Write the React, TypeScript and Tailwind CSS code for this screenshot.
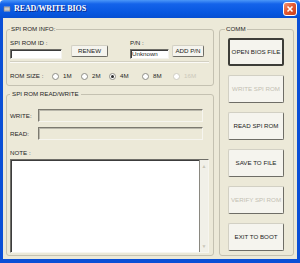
import React from 'react';

// 오른쪽 COMM 버튼 목록
const commButtons = [
  { label: 'OPEN BIOS FILE', isDefault: true, disabled: false },
  { label: 'WRITE SPI ROM', isDefault: false, disabled: true },
  { label: 'READ SPI ROM', isDefault: false, disabled: false },
  { label: 'SAVE TO FILE', isDefault: false, disabled: false },
  { label: 'VERIFY SPI ROM', isDefault: false, disabled: true },
  { label: 'EXIT TO BOOT', isDefault: false, disabled: false },
];

const romSizes = [
  { label: '1M', width: 'w-[29px]', checked: false, disabled: false },
  { label: '2M', width: 'w-[28px]', checked: false, disabled: false },
  { label: '4M', width: 'w-[33px]', checked: true, disabled: false },
  { label: '8M', width: 'w-[31px]', checked: false, disabled: false },
  { label: '16M', width: 'w-[30px]', checked: false, disabled: true },
];

const XpButton = ({
  children,
  className = '',
  isDefault = false,
  disabled = false,
}: {
  children: React.ReactNode;
  className?: string;
  isDefault?: boolean;
  disabled?: boolean;
}) => (
  <div
    className={`flex items-center justify-center rounded-[2px] bg-[#f5f4ee] ${
      isDefault
        ? 'border-2 border-[#3d3d38]'
        : 'border border-[#d2d0c4] border-r-[#6e6d66] border-b-[#6e6d66]'
    } ${disabled ? 'text-[#c3c0b2]' : 'text-[#1c1c1c]'} ${className}`}
  >
    {children}
  </div>
);

const Radio = ({
  label,
  width,
  checked,
  disabled,
}: {
  label: string;
  width: string;
  checked: boolean;
  disabled: boolean;
}) => (
  <div className={`flex items-center gap-[4px] ${width}`}>
    <span
      className={`flex h-[7px] w-[7px] items-center justify-center rounded-full border bg-white ${
        disabled ? 'border-[#cfcdc2]' : 'border-[#8e8d86]'
      }`}
    >
      {checked && <span className="h-[3px] w-[3px] rounded-full bg-[#2a2a2a]" />}
    </span>
    <span className={disabled ? 'text-[#cbc8ba]' : ''}>{label}</span>
  </div>
);

// 움푹 들어간 필드 (WRITE / READ)
const SunkenField = ({ label }: { label: string }) => (
  <div className="flex items-center">
    <span className="w-[28px]">{label}</span>
    <div className="h-[13px] w-[165px] border border-[#f6f5ef] border-t-[#7c7a70] border-l-[#7c7a70] bg-[#ece9d8] shadow-[inset_1px_1px_0_#b9b7ab]" />
  </div>
);

export default function App() {
  return (
    <div className="flex h-[263px] w-[300px] flex-col font-['Liberation_Sans',Arial,sans-serif] text-[6.2px] leading-[8px] text-[#262626]">
      {/* 타이틀 바 */}
      <div className="flex h-[18px] items-center rounded-t-[4px] bg-[linear-gradient(180deg,#4b97f8_0%,#1463ea_22%,#0757e0_70%,#064fd2_100%)] pl-[3px] pr-[3px]">
        <svg width="8" height="8" viewBox="0 0 8 8" className="mr-[3px]">
          <rect x="1" y="2" width="6" height="4" fill="#c9c9c9" stroke="#7a7a7a" strokeWidth="0.6" />
          <path d="M2 1v1M4 1v1M6 1v1M2 6v1M4 6v1M6 6v1" stroke="#d8d8d8" strokeWidth="0.6" />
        </svg>
        <span className="font-['Liberation_Serif',serif] text-[8px] font-bold tracking-[-0.1px] text-white [text-shadow:1px_1px_0_#0a2a8a]">
          READ/WRITE BIOS
        </span>
        <div className="ml-auto flex h-[14px] w-[14px] items-center justify-center rounded-[3px] border border-white bg-[linear-gradient(135deg,#f29477_0%,#e35a32_45%,#c93f1c_100%)]">
          <svg width="8" height="8" viewBox="0 0 8 8">
            <path d="M1.5 1.5L6.5 6.5M6.5 1.5L1.5 6.5" stroke="white" strokeWidth="1.6" />
          </svg>
        </div>
      </div>

      {/* 본문 */}
      <div className="flex h-[245px] gap-[5px] border-x-[3px] border-b-[4px] border-[#0a4fd6] bg-[#ece9d8] pl-[3px] pt-[7px]">
        {/* 왼쪽 컬럼 */}
        <div className="flex w-[208px] flex-col gap-[4px]">
          <fieldset className="h-[61px] rounded-[3px] border border-[#c4c1b1] pl-[3px]">
            <legend className="px-[1px]">SPI ROM INFO:</legend>
            <div className="mt-[6px] flex items-start">
              <div className="flex w-[52px] flex-col gap-[2px]">
                <span>SPI ROM ID :</span>
                <div className="h-[10px] border border-[#f4f3ee] border-t-[#6f6e68] border-l-[#6f6e68] bg-white shadow-[inset_1px_1px_0_#3c3c3c]" />
              </div>
              <XpButton className="ml-[9px] mt-[6px] h-[12px] w-[37px]">RENEW</XpButton>
              <div className="ml-[22px] flex w-[39px] flex-col gap-[2px]">
                <span>P/N :</span>
                <div className="flex h-[10px] items-center border border-[#f4f3ee] border-t-[#6f6e68] border-l-[#6f6e68] bg-white pl-[1px] shadow-[inset_1px_1px_0_#3c3c3c]">
                  Unknown
                </div>
              </div>
              <XpButton className="ml-[3px] mt-[6px] h-[12px] w-[32px]">ADD P/N</XpButton>
            </div>
            <div className="mr-[4px] mt-[2px] border-t border-[#d3d0c2] shadow-[0_1px_0_#fbfaf6]" />
            <div className="mt-[10px] flex items-center">
              <span className="w-[42px]">ROM SIZE :</span>
              {romSizes.map((r) => (
                <Radio key={r.label} {...r} />
              ))}
            </div>
          </fieldset>

          <fieldset className="h-[166px] rounded-[3px] border border-[#c4c1b1] pl-[3px]">
            <legend className="px-[2px]">SPI ROM READ/WRITE</legend>
            <div className="mt-[11px] flex flex-col gap-[5px]">
              <SunkenField label="WRITE:" />
              <SunkenField label="READ:" />
            </div>
            <div className="mt-[9px]">NOTE :</div>
            <div className="mt-[2px] flex h-[94px] w-[199px] border border-[#f6f5ef] border-t-[#6f6e68] border-l-[#6f6e68] bg-white shadow-[inset_1px_1px_0_#3c3c3c]">
              <div className="flex-1 border-r border-[#8a8880]" />
              <div className="flex w-[8px] flex-col items-center justify-between bg-[#f1f0e8] py-[2px] text-[5px] text-[#c9c6b8]">
                <span>▲</span>
                <span>▼</span>
              </div>
            </div>
          </fieldset>
        </div>

        {/* COMM */}
        <fieldset className="h-[231px] w-[75px] rounded-[3px] border border-[#c4c1b1] pl-[5px]">
          <legend className="px-[1px]">COMM</legend>
          <div className="ml-[3px] mt-[5px] flex flex-col gap-[9px]">
            {commButtons.map((b) => (
              <XpButton
                key={b.label}
                className="h-[28px] w-[56px]"
                isDefault={b.isDefault}
                disabled={b.disabled}
              >
                {b.label}
              </XpButton>
            ))}
          </div>
        </fieldset>
      </div>
    </div>
  );
}
